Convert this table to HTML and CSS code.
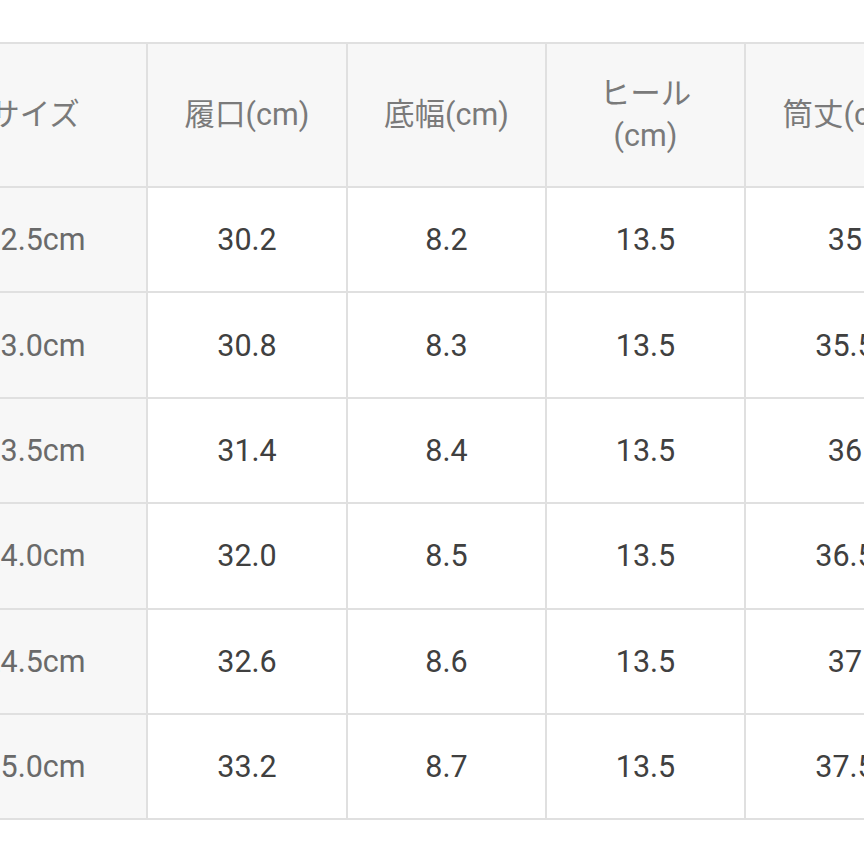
FILE: index.html
```html
<!DOCTYPE html>
<html lang="ja">
<head>
<meta charset="utf-8">
<link rel="stylesheet" href="styles.css">
</head>
<body>
<div class="page">
  <table class="size-table">
    <colgroup>
      <col class="c1"><col class="c2"><col class="c3"><col class="c4"><col class="c5"><col class="c6">
    </colgroup>
    <thead>
      <tr>
        <th>サイズ</th>
        <th>履口(cm)</th>
        <th>底幅(cm)</th>
        <th>ヒール<br>(cm)</th>
        <th>筒丈(cm)</th>
        <th>重量(g)</th>
      </tr>
    </thead>
    <tbody>
      <tr><td class="size">22.5cm</td><td>30.2</td><td>8.2</td><td>13.5</td><td>35</td><td>450</td></tr>
      <tr><td class="size">23.0cm</td><td>30.8</td><td>8.3</td><td>13.5</td><td>35.5</td><td>460</td></tr>
      <tr><td class="size">23.5cm</td><td>31.4</td><td>8.4</td><td>13.5</td><td>36</td><td>470</td></tr>
      <tr><td class="size">24.0cm</td><td>32.0</td><td>8.5</td><td>13.5</td><td>36.5</td><td>480</td></tr>
      <tr><td class="size">24.5cm</td><td>32.6</td><td>8.6</td><td>13.5</td><td>37</td><td>490</td></tr>
      <tr><td class="size">25.0cm</td><td>33.2</td><td>8.7</td><td>13.5</td><td>37.5</td><td>500</td></tr>
    </tbody>
  </table>
</div>
</body>
</html>
```
FILE: styles.css
```css
html, body {
  margin: 0;
  padding: 0;
  background: #ffffff;
}
.page {
  width: 864px;
  height: 864px;
  overflow: hidden;
  padding-top: 42px;
  box-sizing: border-box;
}
.size-table {
  border-collapse: collapse;
  table-layout: fixed;
  width: 1224px;
  margin-left: -79px;
  font-family: Roboto, "Noto Sans CJK JP", sans-serif;
  font-size: 30.5px;
}
.c1 { width: 225px; }
.c2 { width: 200px; }
.c3 { width: 199px; }
.c4 { width: 199px; }
.c5 { width: 200px; }
.c6 { width: 200px; }
.size-table th,
.size-table td {
  border: 2px solid #e0e0e0;
  text-align: center;
  vertical-align: middle;
  padding: 0;
}
.size-table th {
  height: 142px;
  background: #f7f7f7;
  color: #7a7a7a;
  font-weight: normal;
  line-height: 42px;
}
.size-table td {
  height: 103.4px;
  color: #404040;
  background: #ffffff;
}
.size-table td.size {
  background: #f7f7f7;
  color: #6a6a6a;
}
```
